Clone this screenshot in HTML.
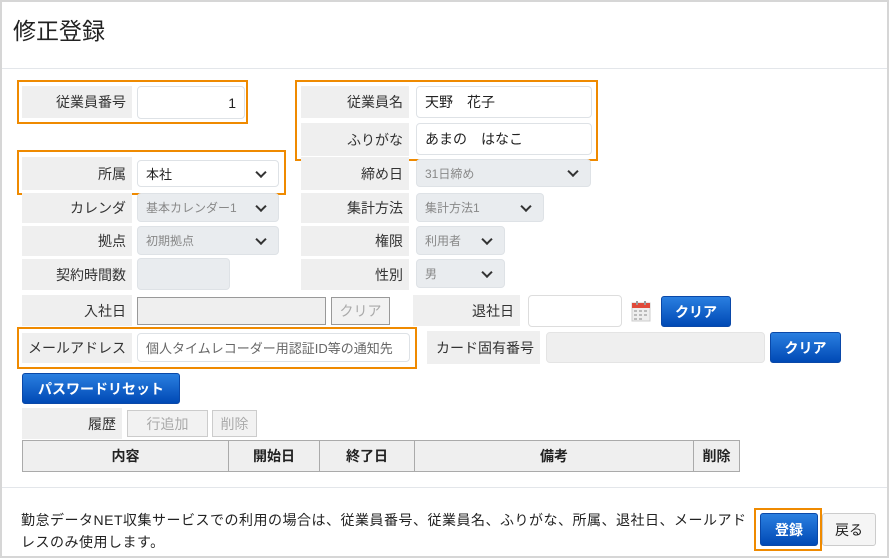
<!DOCTYPE html>
<html><head><meta charset="utf-8"><style>
*{box-sizing:border-box;margin:0;padding:0}
body{width:889px;height:558px;background:#fff;font-family:"Liberation Sans","Noto Sans CJK JP",sans-serif;position:relative;overflow:hidden;color:#333}
.frame{position:absolute;left:0;top:0;width:889px;height:558px;border:2px solid #d6d6d6}
.a{position:absolute}
.lbl{position:absolute;background:#efefef;font-size:14px;text-align:right;padding-right:6px;display:flex;align-items:center;justify-content:flex-end;color:#333}
.inp{position:absolute;background:#fff;border:1px solid #dee2e6;border-radius:4px;font-size:14px;display:flex;align-items:center;padding:0 8px;color:#222}
.dis{background:#e9ecef;color:#888;font-size:12px}
.sel::after{content:"";position:absolute;right:13px;top:50%;width:6px;height:6px;border-right:2px solid #333;border-bottom:2px solid #333;transform:translateY(-70%) rotate(45deg)}
.ob{position:absolute;border:2px solid #ef8a00}
.btn{position:absolute;background:linear-gradient(#2a7fe0,#0049b5);color:#fff;font-size:14px;font-weight:bold;display:flex;align-items:center;justify-content:center;border-radius:3px;border:1px solid #0a48a8}
.gbtn{position:absolute;background:#f2f2f2;border:1px solid #ccc;color:#aaa;font-size:14px;display:flex;align-items:center;justify-content:center}
table{position:absolute;left:22px;top:440px;border-collapse:collapse;font-size:14px;font-weight:bold}
td{border:1px solid #aaa;background:#efefef;text-align:center;height:31px;color:#222}
</style></head><body>
<div class="frame"></div>
<div class="a" style="left:13px;top:12px;font-size:23px;color:#222">修正登録</div>
<div class="a" style="left:2px;top:68px;width:885px;height:1px;background:#e3e6ea"></div>

<div class="lbl" style="left:22px;top:86px;width:110px;height:32px">従業員番号</div>
<div class="inp" style="left:137px;top:86px;width:108px;height:33px;justify-content:flex-end">1</div>
<div class="ob" style="left:17px;top:80px;width:231px;height:44px"></div>

<div class="lbl" style="left:301px;top:86px;width:108px;height:32px">従業員名</div>
<div class="inp" style="left:416px;top:86px;width:176px;height:32px">天野　花子</div>
<div class="lbl" style="left:301px;top:123px;width:108px;height:33px">ふりがな</div>
<div class="inp" style="left:416px;top:123px;width:176px;height:32px">あまの　はなこ</div>
<div class="ob" style="left:295px;top:80px;width:303px;height:81px"></div>

<div class="lbl" style="left:22px;top:157px;width:110px;height:33px">所属</div>
<div class="inp sel" style="left:137px;top:160px;width:142px;height:27px;font-size:13px">本社</div>
<div class="ob" style="left:17px;top:150px;width:269px;height:45px"></div>

<div class="lbl" style="left:301px;top:157px;width:108px;height:33px">締め日</div>
<div class="inp sel dis" style="left:416px;top:159px;width:175px;height:28px">31日締め</div>

<div class="lbl" style="left:22px;top:193px;width:110px;height:30px">カレンダ</div>
<div class="inp sel dis" style="left:137px;top:193px;width:142px;height:29px">基本カレンダー1</div>
<div class="lbl" style="left:301px;top:193px;width:108px;height:30px">集計方法</div>
<div class="inp sel dis" style="left:416px;top:193px;width:128px;height:29px">集計方法1</div>

<div class="lbl" style="left:22px;top:226px;width:110px;height:30px">拠点</div>
<div class="inp sel dis" style="left:137px;top:226px;width:142px;height:29px">初期拠点</div>
<div class="lbl" style="left:301px;top:226px;width:108px;height:30px">権限</div>
<div class="inp sel dis" style="left:416px;top:226px;width:89px;height:29px">利用者</div>

<div class="lbl" style="left:22px;top:259px;width:110px;height:31px">契約時間数</div>
<div class="inp dis" style="left:137px;top:258px;width:93px;height:32px"></div>
<div class="lbl" style="left:301px;top:259px;width:108px;height:31px">性別</div>
<div class="inp sel dis" style="left:416px;top:259px;width:89px;height:29px">男</div>

<div class="lbl" style="left:22px;top:295px;width:110px;height:31px">入社日</div>
<div class="a" style="left:137px;top:297px;width:189px;height:28px;background:#efefef;border:1px solid #999"></div>
<div class="gbtn" style="left:331px;top:297px;width:59px;height:28px;border-color:#999">クリア</div>
<div class="lbl" style="left:413px;top:295px;width:107px;height:31px">退社日</div>
<div class="inp" style="left:528px;top:295px;width:94px;height:32px;border-color:#ddd"></div>
<svg class="a" style="left:631px;top:300px" width="20" height="22" viewBox="0 0 20 22"><rect x="1" y="3" width="18" height="18" fill="#eee" stroke="#ccc"/><rect x="1" y="3" width="18" height="5" fill="#e04a3a"/><rect x="5" y="1" width="2" height="4" fill="#999"/><rect x="13" y="1" width="2" height="4" fill="#999"/><g fill="#bbb"><rect x="3" y="10" width="3" height="2"/><rect x="8" y="10" width="3" height="2"/><rect x="13" y="10" width="3" height="2"/><rect x="3" y="14" width="3" height="2"/><rect x="8" y="14" width="3" height="2"/><rect x="13" y="14" width="3" height="2"/><rect x="3" y="18" width="3" height="2"/><rect x="8" y="18" width="3" height="2"/></g></svg>
<div class="btn" style="left:661px;top:296px;width:70px;height:31px">クリア</div>

<div class="lbl" style="left:22px;top:333px;width:110px;height:30px;padding-right:6px">メールアドレス</div>
<div class="inp" style="left:137px;top:333px;width:273px;height:29px;font-size:13px;color:#666">個人タイムレコーダー用認証ID等の通知先</div>
<div class="ob" style="left:17px;top:327px;width:400px;height:42px"></div>
<div class="lbl" style="left:427px;top:331px;width:113px;height:33px">カード固有番号</div>
<div class="inp" style="left:546px;top:332px;width:219px;height:31px;background:#efefef;border-color:#e4e4e4"></div>
<div class="btn" style="left:770px;top:332px;width:71px;height:31px">クリア</div>

<div class="btn" style="left:22px;top:373px;width:158px;height:31px">パスワードリセット</div>

<div class="lbl" style="left:22px;top:408px;width:100px;height:31px">履歴</div>
<div class="gbtn" style="left:127px;top:410px;width:81px;height:27px">行追加</div>
<div class="gbtn" style="left:212px;top:410px;width:45px;height:27px">削除</div>

<table><tr><td style="width:206px">内容</td><td style="width:91px">開始日</td><td style="width:95px">終了日</td><td style="width:279px">備考</td><td style="width:46px">削除</td></tr></table>

<div class="a" style="left:2px;top:487px;width:885px;height:1px;background:#e3e6ea"></div>
<div class="a" style="left:21px;top:509px;white-space:nowrap;font-size:14px;letter-spacing:0.5px;line-height:22px;color:#222">勤怠データNET収集サービスでの利用の場合は、従業員番号、従業員名、ふりがな、所属、退社日、メールアド<br>レスのみ使用します。</div>
<div class="btn" style="left:760px;top:513px;width:58px;height:33px">登録</div>
<div class="ob" style="left:754px;top:508px;width:68px;height:43px"></div>
<div class="a" style="left:822px;top:513px;width:54px;height:33px;background:#f5f5f5;border:1px solid #ccc;border-radius:3px;font-size:14px;display:flex;align-items:center;justify-content:center;color:#222">戻る</div>
</body></html>
